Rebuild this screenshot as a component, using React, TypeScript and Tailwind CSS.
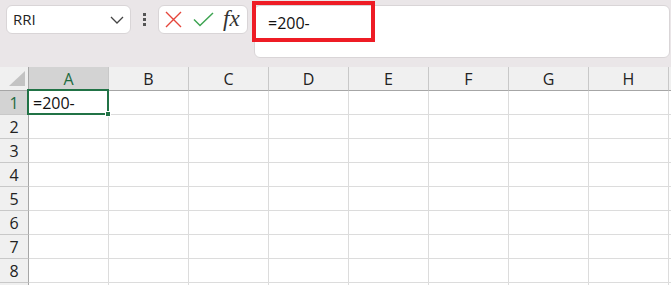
import React from "react";

const cols = ["A", "B", "C", "D", "E", "F", "G", "H"];
const rows = [1, 2, 3, 4, 5, 6, 7, 8, 9];

export default function App() {
  return (
    <div className="w-[671px] h-[285px] overflow-hidden bg-white font-['Open_Sans','Noto_Sans',sans-serif] text-[#222] relative">
      {/* Top bar */}
      <div className="h-[67px] bg-[#eae6e8] flex items-start pl-[6px] pt-[5px]">
        <div className="w-[125px] h-[29px] bg-white border border-[#d9d5d7] rounded-[6px] flex items-center justify-between pl-[6px] pr-[5px]">
          <span className="text-[15px] leading-none text-[#222]">RRI</span>
          <svg width="14" height="8" viewBox="0 0 14 8" className="mr-[1px]">
            <path d="M1 1 L7 7 L13 1" fill="none" stroke="#444" strokeWidth="1.3" />
          </svg>
        </div>
        <div className="w-[27px] h-[29px] flex flex-col items-center justify-center gap-[2px]">
          <div className="w-[3px] h-[3px] bg-[#555]" />
          <div className="w-[3px] h-[3px] bg-[#555]" />
          <div className="w-[3px] h-[3px] bg-[#555]" />
        </div>
        <div className="w-[90px] h-[29px] bg-white border border-[#d9d5d7] rounded-[6px] flex items-center pl-[6px]">
          <svg width="17" height="17" viewBox="0 0 17 17">
            <path d="M1 1 L16 16 M16 1 L1 16" stroke="#e5453b" strokeWidth="1.4" fill="none" />
          </svg>
          <svg width="21" height="15" viewBox="0 0 21 15" className="ml-[11px]">
            <path d="M1 7.5 L7 13.5 L20 1" stroke="#3ea452" strokeWidth="1.5" fill="none" />
          </svg>
          <span className="ml-[9px] font-['Liberation_Serif',serif] italic text-[23px] leading-none text-[#333] -mt-[3px]">
            fx
          </span>
        </div>
        <div className="ml-[6px] w-[416px] h-[53px] bg-white border border-[#d9d5d7] rounded-[6px] pl-[13px] pt-[5px]">
          <span className="text-[16px] leading-none text-[#111]">=200-</span>
        </div>
      </div>

      {/* Red annotation */}
      <div className="absolute left-[252px] top-[1px] w-[123px] h-[41px] border-4 border-[#ee1c25]" />

      {/* Grid */}
      <div className="flex flex-col">
        {/* header row */}
        <div className="flex h-[24px]">
          <div className="w-[29px] shrink-0 bg-[#f0f0f0] border-b border-r border-b-[#a6a6a6] border-r-[#a6a6a6] relative">
            <svg width="16" height="15" viewBox="0 0 16 15" className="absolute left-[9px] top-[4px]">
              <path d="M16 0 L16 15 L0 15 Z" fill="#c3c3c3" />
            </svg>
          </div>
          {cols.map((c, i) => (
            <div
              key={c}
              className={`w-[80px] shrink-0 border-b border-r border-b-[#a6a6a6] border-r-[#c8c8c8] flex items-center justify-center text-[16px] leading-none ${
                i === 0 ? "bg-[#d3d3d3] text-[#1d6b40]" : "bg-[#f0f0f0] text-[#222]"
              }`}
            >
              {c}
            </div>
          ))}
          <div className="flex-1 bg-[#f0f0f0] border-b border-b-[#a6a6a6]" />
        </div>
        {rows.map((r) => (
          <div key={r} className="flex h-[24px] shrink-0">
            <div
              className={`w-[29px] shrink-0 border-r border-b border-r-[#a6a6a6] border-b-[#c8c8c8] flex items-center justify-center text-[16px] leading-none ${
                r === 1 ? "bg-[#d3d3d3] text-[#1d6b40]" : "bg-[#f0f0f0] text-[#222]"
              }`}
            >
              {r < 9 ? r : ""}
            </div>
            {cols.map((c, i) => (
              <div
                key={c}
                className="w-[80px] shrink-0 border-r border-b border-[#dcdcdc] flex items-center pl-[4px] text-[16px] leading-none text-[#111]"
              >
                {r === 1 && i === 0 ? "=200-" : ""}
              </div>
            ))}
            <div className="flex-1 border-b border-[#dcdcdc]" />
          </div>
        ))}
      </div>

      {/* Selection */}
      <div className="absolute left-[27px] top-[89px] w-[82px] h-[26px] border-2 border-[#217346]" />
      <div className="absolute left-[105px] top-[111px] w-[6px] h-[6px] bg-[#217346] border border-white" />
    </div>
  );
}
